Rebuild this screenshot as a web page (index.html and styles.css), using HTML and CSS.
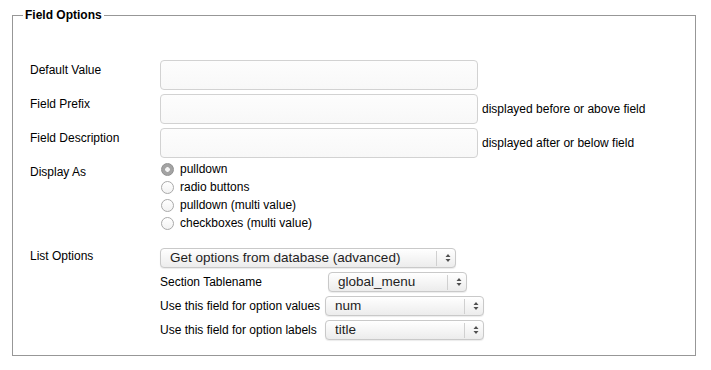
FILE: index.html
```html
<!DOCTYPE html>
<html>
<head>
<meta charset="utf-8">
<title>Field Options</title>
<link rel="stylesheet" href="styles.css">
</head>
<body>
<fieldset class="panel">
  <legend class="panel-title">Field Options</legend>
  <div class="form">
    <div class="label">Default Value</div>
    <div class="ctrl ctrl-text"><input class="text" type="text"></div>

    <div class="label">Field Prefix</div>
    <div class="ctrl ctrl-text"><input class="text" type="text"><span class="hint">displayed before or above field</span></div>

    <div class="label">Field Description</div>
    <div class="ctrl ctrl-text"><input class="text" type="text"><span class="hint">displayed after or below field</span></div>

    <div class="label">Display As</div>
    <div class="ctrl radios">
      <label class="radio-row"><input class="radio" type="radio" name="disp" checked><span>pulldown</span></label>
      <label class="radio-row"><input class="radio" type="radio" name="disp"><span>radio buttons</span></label>
      <label class="radio-row"><input class="radio" type="radio" name="disp"><span>pulldown (multi value)</span></label>
      <label class="radio-row"><input class="radio" type="radio" name="disp"><span>checkboxes (multi value)</span></label>
    </div>

    <div class="label label-list">List Options</div>
    <div class="ctrl list">
      <select class="sel sel-wide"><option>Get options from database (advanced)</option></select>
      <div class="subgrid">
        <div class="sublabel">Section Tablename</div>
        <div class="subctrl"><select class="sel sel-mid"><option>global_menu</option></select></div>
        <div class="sublabel">Use this field for option values</div>
        <div class="subctrl"><select class="sel sel-long"><option>num</option></select></div>
        <div class="sublabel">Use this field for option labels</div>
        <div class="subctrl"><select class="sel sel-long"><option>title</option></select></div>
      </div>
    </div>
  </div>
</fieldset>
</body>
</html>
```

FILE: styles.css
```css
html, body {
  margin: 0;
  padding: 0;
  background: #fff;
}
body {
  margin: 8px;
  font-family: "Liberation Sans", Arial, Helvetica, sans-serif;
  font-size: 12px;
  color: #000;
}
.panel {
  margin: 0 7px 0 4px;
  padding: 0 14px 13px 17px;
  border: 1px solid #979797;
  min-width: 0;
}
.panel-title {
  font-weight: bold;
  font-size: 12px;
  padding: 0 2px;
  margin-left: -7px;
  line-height: 14px;
}
.form {
  display: grid;
  grid-template-columns: 130px 1fr;
  margin-top: 36px;
}
.label {
  padding-top: 5px;
  line-height: 14px;
}
.ctrl-text {
  display: flex;
  align-items: center;
  height: 34px;
}
.text {
  box-sizing: border-box;
  width: 318px;
  height: 30px;
  margin: 0;
  border: 1px solid #d2d2d2;
  border-radius: 4px;
  background: linear-gradient(#fdfdfd, #f8f8f8);
  font: inherit;
  outline: none;
}
.hint {
  margin-left: 4px;
  line-height: 14px;
}
.radios {
  display: flex;
  flex-direction: column;
  padding-bottom: 12px;
}
.radio-row {
  display: flex;
  align-items: center;
  height: 18px;
  line-height: 14px;
}
.radio {
  appearance: none;
  -webkit-appearance: none;
  box-sizing: border-box;
  width: 13px;
  height: 13px;
  margin: 0 6px 0 1px;
  border: 1px solid #a9a9a9;
  border-radius: 50%;
  background: linear-gradient(#ffffff, #f2f2f2);
  flex: none;
}
.radio:checked {
  border-color: #8f8f8f;
  background: radial-gradient(circle, #f4f4f4 0 2px, #a3a3a3 2.6px);
}
.label-list {
  padding-top: 5px;
}
.list {
  padding-top: 4px;
}
.sel {
  appearance: none;
  -webkit-appearance: none;
  box-sizing: border-box;
  height: 20px;
  margin: 0;
  padding: 0 24px 0 9px;
  border: 1px solid #c9c9c9;
  border-radius: 4px;
  box-shadow: 0 1px 1px rgba(0, 0, 0, 0.08);
  font-family: "Liberation Sans", Arial, Helvetica, sans-serif;
  font-size: 13.5px;
  line-height: 18px;
  color: #1e1e1e;
  background-color: #f3f3f3;
  background-image: url("data:image/svg+xml;utf8,<svg xmlns='http://www.w3.org/2000/svg' width='19' height='18'><line x1='0.5' y1='2' x2='0.5' y2='17' stroke='%23d0d0d0'/><path d='M12 5 L14.5 8 H9.5 Z M12 13 L14.5 10 H9.5 Z' fill='%23505050'/></svg>"), linear-gradient(#ffffff, #ececec);
  background-repeat: no-repeat, repeat;
  background-position: right 0 center, 0 0;
  outline: none;
}
.sel-wide {
  width: 296px;
  display: block;
}
.sel-mid {
  width: 139px;
  margin-left: 3px;
}
.sel-long {
  width: 159px;
}
.subgrid {
  display: grid;
  grid-template-columns: 165px auto;
  margin-top: 2px;
}
.sublabel {
  display: flex;
  align-items: center;
  height: 24px;
  line-height: 14px;
}
.subctrl {
  display: flex;
  align-items: center;
  height: 24px;
}
```
